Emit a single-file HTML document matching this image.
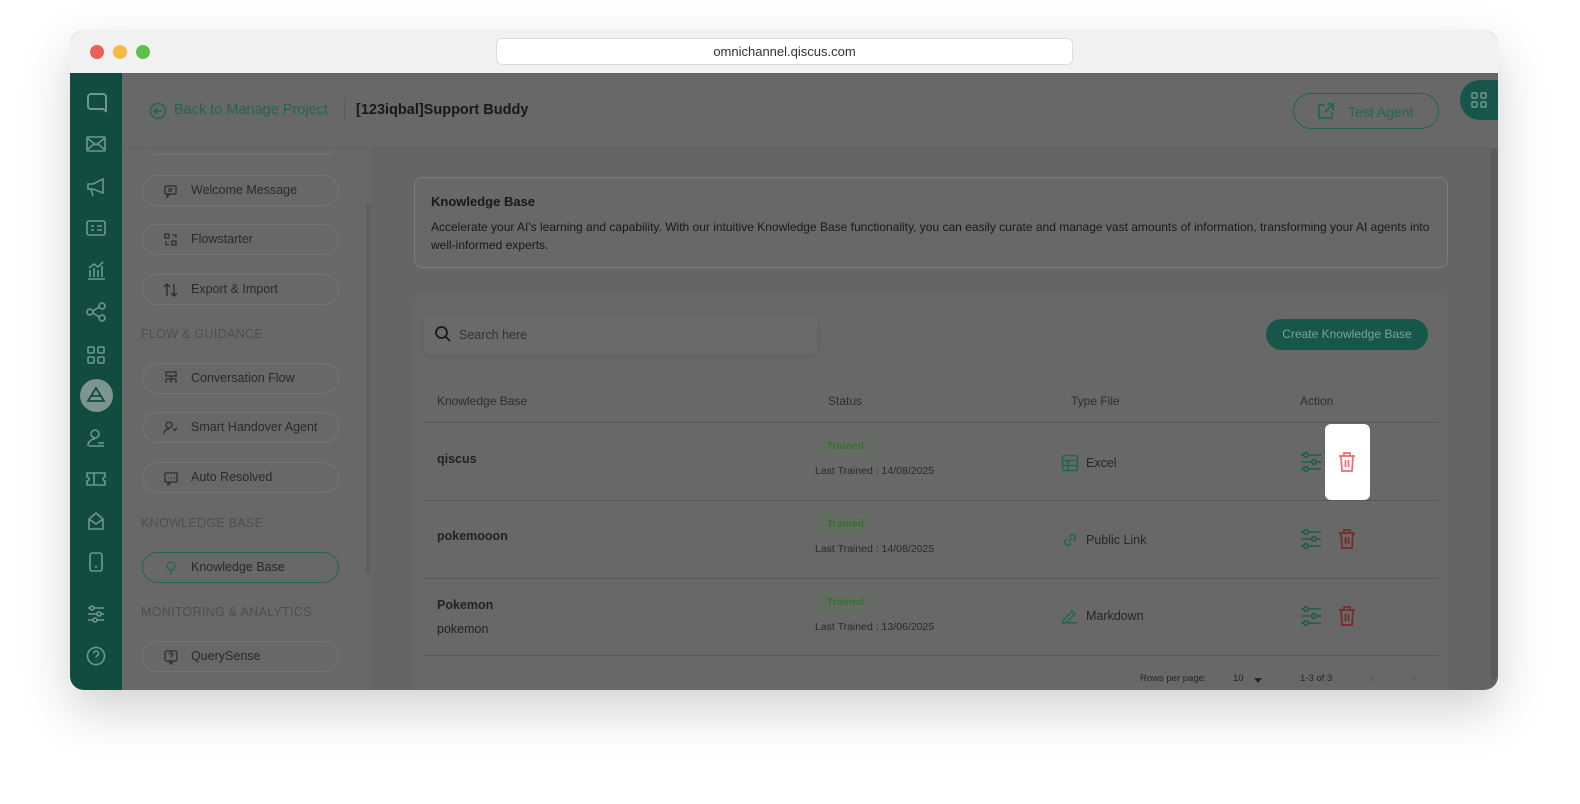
<!DOCTYPE html>
<html><head><meta charset="utf-8"><style>
*{box-sizing:border-box;margin:0;padding:0}
body{width:1580px;height:804px;background:#fff;font-family:"Liberation Sans",sans-serif;position:relative;overflow:hidden}
.a{position:absolute}
.win{left:70px;top:30px;width:1428px;height:660px;border-radius:14px;overflow:hidden;box-shadow:0 20px 50px rgba(0,0,0,.18);background:#656565}
.tb{left:0;top:0;width:1428px;height:43px;background:#f1f1f1}
.dot{width:14px;height:14px;border-radius:50%;top:15px}
.url{left:426px;top:8px;width:577px;height:27px;background:#fff;border:1px solid #ddd;border-radius:6px;font-size:13px;color:#333;text-align:center;line-height:25px}
.rail{left:0;top:43px;width:52px;height:617px;background:#124b3f}
.hdr{left:52px;top:43px;width:1376px;height:76px;background:#686868;border-bottom:1px solid #606060;z-index:2}
.menu{left:52px;top:119px;width:248px;height:541px;background:#686868;overflow:hidden}
.pill{position:absolute;left:20px;width:197px;height:31px;border:1px solid #747474;border-radius:16px;font-size:12.5px;color:#2a2a2a;line-height:29px;padding-left:48px}
.pill svg{position:absolute;left:20px;top:7px}
.sec{position:absolute;left:19px;font-size:12.5px;color:#4e4e4e;letter-spacing:.3px}
.ic{position:absolute;left:15px}
.card1{left:344px;top:147px;width:1034px;height:91px;border:1px solid #7c7c7c;border-radius:8px;background:#686868}
.card2{left:344px;top:263px;width:1034px;height:400px;background:#686868;border-radius:6px}
.row{position:absolute;left:10px;width:1014px;border-bottom:1px solid #585858}
.nm{position:absolute;left:13px;font-size:12.5px;font-weight:bold;color:#222}
.chip{position:absolute;left:391px;width:61px;height:23px;background:#646c64;border-radius:4px;color:#35702f;font-size:10.5px;text-align:center;line-height:23px;font-weight:bold}
.lt{position:absolute;left:391px;font-size:10.5px;color:#2a2a2a}
.tf{position:absolute;left:662px;font-size:12.5px;color:#262626}
.tf svg{position:absolute;left:-25px;top:-2px}
.th{position:absolute;top:101px;font-size:12px;color:#2e2e2e}
</style></head><body>
<div class="a win">
 <div class="a tb">
  <div class="a dot" style="left:20px;background:#ec5f57"></div>
  <div class="a dot" style="left:43px;background:#f3bb42"></div>
  <div class="a dot" style="left:66px;background:#5ec24a"></div>
  <div class="a url">omnichannel.qiscus.com</div>
 </div>
 <div class="a rail">
  <svg class="ic" style="top:18px" width="24" height="24" viewBox="0 0 24 24" fill="none" stroke="#6f978d" stroke-width="2"><path d="M6 3h12a3 3 0 0 1 3 3v14l-3-2H6a3 3 0 0 1-3-3V6a3 3 0 0 1 3-3z"/></svg>
  <svg class="ic" style="top:62px" width="22" height="18" viewBox="0 0 22 18" fill="none" stroke="#6f978d" stroke-width="1.6"><rect x="2" y="2" width="18" height="14" rx="1"/><path d="M2 3l9 7 9-7M2 15l7-6M20 15l-7-6"/></svg>
  <svg class="ic" style="top:103px" width="22" height="22" viewBox="0 0 22 22" fill="none" stroke="#6f978d" stroke-width="1.6"><path d="M3 8h5l10-5v14L8 13H3zM6 13l2 7"/></svg>
  <svg class="ic" style="top:146px" width="22" height="18" viewBox="0 0 22 18" fill="none" stroke="#6f978d" stroke-width="1.6"><rect x="2" y="2" width="18" height="14" rx="2"/><path d="M6 7h3M6 11h3M12 7h5M12 11h5"/></svg>
  <svg class="ic" style="top:186px" width="22" height="22" viewBox="0 0 22 22" fill="none" stroke="#6f978d" stroke-width="1.6"><path d="M3 20h17M5 18v-7M9 18v-9M13 18v-7M17 18v-11M4 9l5-4 4 3 5-5"/></svg>
  <svg class="ic" style="top:228px" width="22" height="22" viewBox="0 0 22 22" fill="none" stroke="#6f978d" stroke-width="1.6"><circle cx="5" cy="11" r="3"/><circle cx="17" cy="5" r="3"/><circle cx="17" cy="17" r="3"/><path d="M8 10l6-4M8 12l6 4"/></svg>
  <svg class="ic" style="top:271px" width="22" height="22" viewBox="0 0 22 22" fill="none" stroke="#6f978d" stroke-width="1.6"><rect x="3" y="3" width="6" height="6" rx="1"/><rect x="13" y="3" width="6" height="6" rx="1"/><rect x="3" y="13" width="6" height="6" rx="1"/><rect x="13" y="13" width="6" height="6" rx="1"/></svg>
  <div class="a" style="left:10px;top:306px;width:33px;height:33px;border-radius:50%;background:#7c958e"></div>
  <svg class="ic" style="top:313px;left:16px" width="20" height="18" viewBox="0 0 20 18" fill="none" stroke="#124b3f" stroke-width="1.8"><path d="M10 2L2 15h16zM6 10h8"/></svg>
  <svg class="ic" style="top:354px" width="22" height="22" viewBox="0 0 22 22" fill="none" stroke="#6f978d" stroke-width="1.6"><circle cx="10" cy="7" r="4"/><path d="M3 19c0-4 3-7 7-7M4 19h15M13 16h6"/></svg>
  <svg class="ic" style="top:397px" width="22" height="18" viewBox="0 0 22 18" fill="none" stroke="#6f978d" stroke-width="1.6"><path d="M2 3h18v4a2 2 0 0 0 0 4v4H2v-4a2 2 0 0 0 0-4zM9 3v12"/></svg>
  <svg class="ic" style="top:437px" width="22" height="22" viewBox="0 0 22 22" fill="none" stroke="#6f978d" stroke-width="1.6"><path d="M4 9l7-6 7 6v10H4zM4 9l7 5 7-5"/></svg>
  <svg class="ic" style="top:478px" width="22" height="22" viewBox="0 0 22 22" fill="none" stroke="#6f978d" stroke-width="1.6"><rect x="5" y="2" width="12" height="18" rx="2"/><path d="M10 16h2"/></svg>
  <svg class="ic" style="top:530px" width="22" height="22" viewBox="0 0 22 22" fill="none" stroke="#6f978d" stroke-width="1.6"><path d="M3 5h16M3 11h16M3 17h16"/><circle cx="7" cy="5" r="2" fill="#124b3f"/><circle cx="14" cy="11" r="2" fill="#124b3f"/><circle cx="10" cy="17" r="2" fill="#124b3f"/></svg>
  <svg class="ic" style="top:572px" width="22" height="22" viewBox="0 0 22 22" fill="none" stroke="#6f978d" stroke-width="1.6"><circle cx="11" cy="11" r="8.5"/><path d="M8.5 8.5a2.5 2.5 0 1 1 3.5 2.3c-.7.4-1 .9-1 1.7M11 15.5v.5"/></svg>
 </div>
 <div class="a hdr">
  <svg class="a" style="left:27px;top:29px" width="18" height="18" viewBox="0 0 18 18" fill="none" stroke="#1f6656" stroke-width="1.6"><circle cx="9" cy="9" r="7.5"/><path d="M13 9H5M8 6L5 9l3 3"/></svg>
  <div class="a" style="left:52px;top:29px;font-size:14.5px;color:#1f6656">Back to Manage Project</div>
  <div class="a" style="left:222px;top:26px;width:1px;height:22px;background:#5c5c5c"></div>
  <div class="a" style="left:234px;top:29px;font-size:14.5px;color:#181818;font-weight:bold">[123iqbal]Support Buddy</div>
  <div class="a" style="left:1171px;top:20px;width:146px;height:36px;border:1.5px solid #1f6656;border-radius:18px"></div>
  <svg class="a" style="left:1195px;top:29px" width="18" height="18" viewBox="0 0 18 18" fill="none" stroke="#1f6656" stroke-width="1.7"><path d="M8 3H2v13h13v-6M10 2h6v6M16 2L8 10"/></svg>
  <div class="a" style="left:1226px;top:31px;font-size:14px;color:#1f6656">Test Agent</div>
  <div class="a" style="left:1338px;top:7px;width:44px;height:40px;border-radius:20px 0 0 20px;background:#17564a"></div>
  <svg class="a" style="left:1348px;top:18px" width="18" height="18" viewBox="0 0 18 18" fill="none" stroke="#6f978d" stroke-width="1.5"><rect x="2" y="2" width="5" height="5" rx="1"/><rect x="11" y="2" width="5" height="5" rx="1"/><rect x="2" y="11" width="5" height="5" rx="1"/><rect x="11" y="11" width="5" height="5" rx="1"/></svg>
 </div>
 <div class="a menu">
  <div class="pill" style="top:-25px"></div>
  <div class="pill" style="top:26px"><svg width="16" height="16" viewBox="0 0 16 16" fill="none" stroke="#2e2e2e" stroke-width="1.3"><rect x="2" y="3" width="11" height="8" rx="1"/><path d="M5 6h5M5 8h4M4 11v3l3-3"/></svg>Welcome Message</div>
  <div class="pill" style="top:75px"><svg width="16" height="16" viewBox="0 0 16 16" fill="none" stroke="#2e2e2e" stroke-width="1.3"><rect x="2" y="2" width="4" height="4"/><rect x="9" y="9" width="4" height="4"/><path d="M9 3h4v3M3 9v4h3"/></svg>Flowstarter</div>
  <div class="pill" style="top:125px"><svg width="16" height="16" viewBox="0 0 16 16" fill="none" stroke="#2e2e2e" stroke-width="1.4"><path d="M4 14V2M1 5l3-3 3 3M11 2v12M8 11l3 3 3-3"/></svg>Export &amp; Import</div>
  <div class="sec" style="top:178px">FLOW &amp; GUIDANCE</div>
  <div class="pill" style="top:214px"><svg width="16" height="16" viewBox="0 0 16 16" fill="none" stroke="#2e2e2e" stroke-width="1.3"><rect x="3" y="1" width="10" height="4"/><path d="M8 5v3M3 8h10M3 8v4M8 8v4M13 8v4"/></svg>Conversation Flow</div>
  <div class="pill" style="top:263px"><svg width="16" height="16" viewBox="0 0 16 16" fill="none" stroke="#2e2e2e" stroke-width="1.3"><circle cx="6" cy="5" r="3"/><path d="M1 14c0-3 2-5 5-5M10 9l1.5 1.5L14 8"/></svg>Smart Handover Agent</div>
  <div class="pill" style="top:313px"><svg width="16" height="16" viewBox="0 0 16 16" fill="none" stroke="#2e2e2e" stroke-width="1.3"><rect x="2" y="3" width="12" height="9" rx="1"/><path d="M5 12v3l3-3M5 8h1M8 8h1M11 8h1"/></svg>Auto Resolved</div>
  <div class="sec" style="top:367px">KNOWLEDGE BASE</div>
  <div class="pill" style="top:403px;border-color:#1f6656"><svg width="16" height="16" viewBox="0 0 16 16" fill="none" stroke="#1f6656" stroke-width="1.3"><circle cx="8" cy="6" r="4"/><path d="M8 10v5"/></svg>Knowledge Base</div>
  <div class="sec" style="top:456px">MONITORING &amp; ANALYTICS</div>
  <div class="pill" style="top:492px"><svg width="16" height="16" viewBox="0 0 16 16" fill="none" stroke="#2e2e2e" stroke-width="1.3"><rect x="2" y="2" width="12" height="10" rx="2"/><path d="M6 12l2 3 2-3M6.5 5.5a1.5 1.5 0 1 1 2 1.4V8M8 9.5v.5"/></svg>QuerySense</div>
  <div class="a" style="left:244px;top:55px;width:5px;height:370px;background:#5e5e5e;border-radius:3px"></div>
 </div>
 <div class="a" style="left:1420px;top:119px;width:8px;height:541px;background:#616161"></div>
 <div class="a" style="left:1421px;top:119px;width:6px;height:530px;background:#5a5a5a;border-radius:3px"></div>
 <div class="a card1">
  <div class="a" style="left:16px;top:16px;font-size:13px;font-weight:bold;color:#181818">Knowledge Base</div>
  <div class="a" style="left:16px;top:40px;width:1000px;font-size:12px;line-height:18px;color:#181818">Accelerate your AI's learning and capability. With our intuitive Knowledge Base functionality, you can easily curate and manage vast amounts of information, transforming your AI agents into well-informed experts.</div>
 </div>
 <div class="a card2">
  <div class="a" style="left:10px;top:22px;width:393px;height:40px;background:#6a6a6a;border-radius:6px;box-shadow:0 1px 4px rgba(0,0,0,.1)"></div>
  <svg class="a" style="left:20px;top:32px" width="18" height="18" viewBox="0 0 18 18" fill="none" stroke="#181818" stroke-width="1.8"><circle cx="7.5" cy="7.5" r="5.5"/><path d="M12 12l4 4"/></svg>
  <div class="a" style="left:45px;top:35px;font-size:12.5px;color:#333">Search here</div>
  <div class="a" style="left:852px;top:26px;width:162px;height:31px;border-radius:16px;background:#17564a;color:#7aa397;font-size:12px;text-align:center;line-height:31px">Create Knowledge Base</div>
  <div class="th" style="left:23px">Knowledge Base</div>
  <div class="th" style="left:414px">Status</div>
  <div class="th" style="left:657px">Type File</div>
  <div class="th" style="left:886px">Action</div>
  <div class="row" style="top:129px;height:1px"></div>
  <div class="row" style="top:130px;height:78px"><div class="nm" style="top:29px">qiscus</div><div class="chip" style="top:12px">Trained</div><div class="lt" style="top:42px">Last Trained : 14/08/2025</div><div class="tf" style="top:33px"><svg width="18" height="18" viewBox="0 0 18 18" fill="none" stroke="#1f6656" stroke-width="1.6"><rect x="1.5" y="1.5" width="15" height="15" rx="2"/><path d="M1.5 6.5h15M1.5 11.5h15M7 6.5v10"/></svg>Excel</div></div>
  <div class="row" style="top:208px;height:78px"><div class="nm" style="top:28px">pokemooon</div><div class="chip" style="top:12px">Trained</div><div class="lt" style="top:42px">Last Trained : 14/08/2025</div><div class="tf" style="top:32px"><svg width="18" height="18" viewBox="0 0 18 18" fill="none" stroke="#1f6656" stroke-width="1.6"><path d="M7.5 10.5l3-3M6 8l-2 2a3 3 0 0 0 4 4l2-2M12 10l2-2a3 3 0 0 0-4-4L8 6"/></svg>Public Link</div></div>
  <div class="row" style="top:286px;height:77px"><div class="nm" style="top:19px">Pokemon</div><div class="nm" style="top:43px;font-weight:normal">pokemon</div><div class="chip" style="top:12px">Trained</div><div class="lt" style="top:42px">Last Trained : 13/06/2025</div><div class="tf" style="top:30px"><svg width="18" height="18" viewBox="0 0 18 18" fill="none" stroke="#1f6656" stroke-width="1.6"><path d="M2 14l9-10 3 3-9 9H2zM5 16c3 0 6-1 11 0"/></svg>Markdown</div></div>
  <div class="a" style="left:726px;top:380px;font-size:9.5px;color:#262626">Rows per page:</div>
  <div class="a" style="left:819px;top:380px;font-size:9.5px;color:#262626">10</div>
  <div class="a" style="left:840px;top:385px;border:4px solid transparent;border-top:5px solid #262626"></div>
  <div class="a" style="left:886px;top:380px;font-size:9.5px;color:#262626">1-3 of 3</div>
  <div class="a" style="left:956px;top:378px;font-size:12px;color:#555">‹</div>
  <div class="a" style="left:998px;top:378px;font-size:12px;color:#555">›</div>
 </div>
 <div class="a" style="left:1255px;top:394px;width:45px;height:76px;background:#fff;border-radius:6px"></div>
 <svg class="a" style="left:1230px;top:421px" width="22" height="22" viewBox="0 0 22 22" fill="none" stroke="#1a5e4e" stroke-width="1.6"><path d="M1 4h20M1 11h20M1 18h20"/><circle cx="6" cy="4" r="2.3" fill="#656565"/><circle cx="14" cy="11" r="2.3" fill="#656565"/><circle cx="6" cy="18" r="2.3" fill="#656565"/></svg>
 <svg class="a" style="left:1230px;top:498px" width="22" height="22" viewBox="0 0 22 22" fill="none" stroke="#1a5e4e" stroke-width="1.6"><path d="M1 4h20M1 11h20M1 18h20"/><circle cx="6" cy="4" r="2.3" fill="#656565"/><circle cx="14" cy="11" r="2.3" fill="#656565"/><circle cx="6" cy="18" r="2.3" fill="#656565"/></svg>
 <svg class="a" style="left:1230px;top:575px" width="22" height="22" viewBox="0 0 22 22" fill="none" stroke="#1a5e4e" stroke-width="1.6"><path d="M1 4h20M1 11h20M1 18h20"/><circle cx="6" cy="4" r="2.3" fill="#656565"/><circle cx="14" cy="11" r="2.3" fill="#656565"/><circle cx="6" cy="18" r="2.3" fill="#656565"/></svg>
 <svg class="a" style="left:1267px;top:421px" width="20" height="22" viewBox="0 0 20 22" fill="none" stroke="#f06a6a" stroke-width="1.7"><path d="M2 5h16M7 5V2h6v3M4 5l1 15h10l1-15M8.5 9v7M11.5 9v7"/></svg>
 <svg class="a" style="left:1267px;top:498px" width="20" height="22" viewBox="0 0 20 22" fill="none" stroke="#7d2828" stroke-width="1.7"><path d="M2 5h16M7 5V2h6v3M4 5l1 15h10l1-15M8.5 9v7M11.5 9v7"/></svg>
 <svg class="a" style="left:1267px;top:575px" width="20" height="22" viewBox="0 0 20 22" fill="none" stroke="#7d2828" stroke-width="1.7"><path d="M2 5h16M7 5V2h6v3M4 5l1 15h10l1-15M8.5 9v7M11.5 9v7"/></svg>
</div>
</body></html>
